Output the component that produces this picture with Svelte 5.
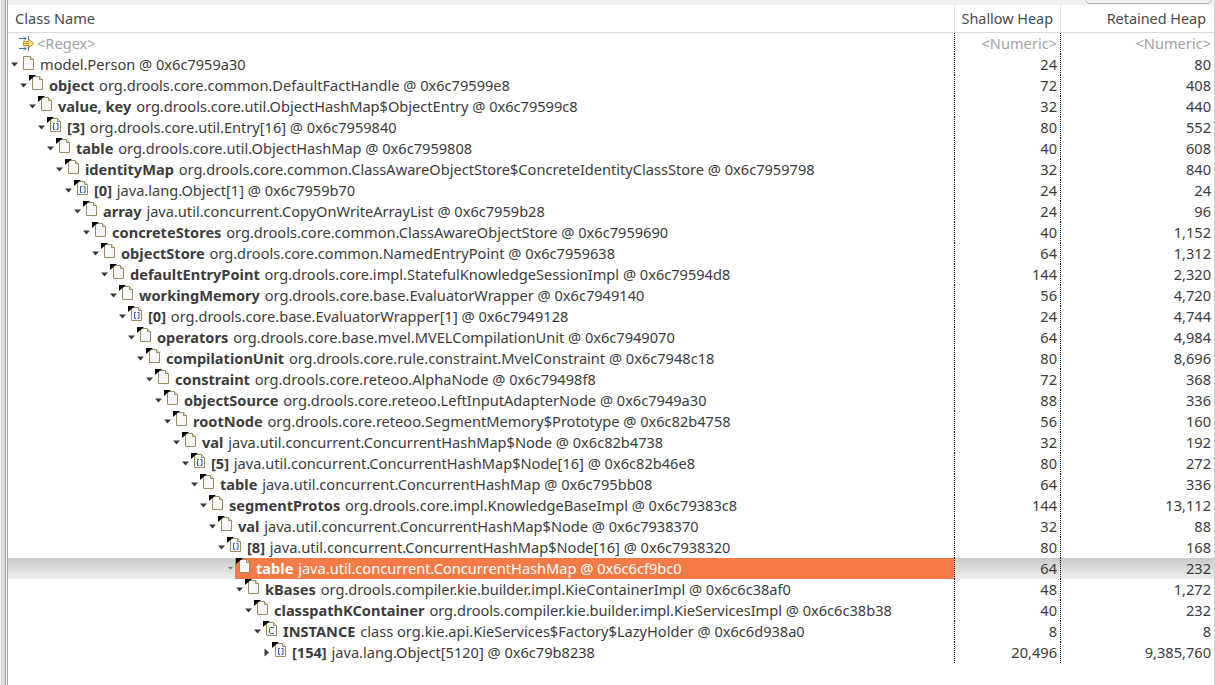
<script>
  const rows = [
    ["", "model.Person @ 0x6c7959a30", "24", "80", "doc"],
    ["object", "org.drools.core.common.DefaultFactHandle @ 0x6c79599e8", "72", "408", "doc"],
    ["value, key", "org.drools.core.util.ObjectHashMap$ObjectEntry @ 0x6c79599c8", "32", "440", "doc"],
    ["[3]", "org.drools.core.util.Entry[16] @ 0x6c7959840", "80", "552", "arr"],
    ["table", "org.drools.core.util.ObjectHashMap @ 0x6c7959808", "40", "608", "doc"],
    ["identityMap", "org.drools.core.common.ClassAwareObjectStore$ConcreteIdentityClassStore @ 0x6c7959798", "32", "840", "doc"],
    ["[0]", "java.lang.Object[1] @ 0x6c7959b70", "24", "24", "arr"],
    ["array", "java.util.concurrent.CopyOnWriteArrayList @ 0x6c7959b28", "24", "96", "doc"],
    ["concreteStores", "org.drools.core.common.ClassAwareObjectStore @ 0x6c7959690", "40", "1,152", "doc"],
    ["objectStore", "org.drools.core.common.NamedEntryPoint @ 0x6c7959638", "64", "1,312", "doc"],
    ["defaultEntryPoint", "org.drools.core.impl.StatefulKnowledgeSessionImpl @ 0x6c79594d8", "144", "2,320", "doc"],
    ["workingMemory", "org.drools.core.base.EvaluatorWrapper @ 0x6c7949140", "56", "4,720", "doc"],
    ["[0]", "org.drools.core.base.EvaluatorWrapper[1] @ 0x6c7949128", "24", "4,744", "arr"],
    ["operators", "org.drools.core.base.mvel.MVELCompilationUnit @ 0x6c7949070", "64", "4,984", "doc"],
    ["compilationUnit", "org.drools.core.rule.constraint.MvelConstraint @ 0x6c7948c18", "80", "8,696", "doc"],
    ["constraint", "org.drools.core.reteoo.AlphaNode @ 0x6c79498f8", "72", "368", "doc"],
    ["objectSource", "org.drools.core.reteoo.LeftInputAdapterNode @ 0x6c7949a30", "88", "336", "doc"],
    ["rootNode", "org.drools.core.reteoo.SegmentMemory$Prototype @ 0x6c82b4758", "56", "160", "doc"],
    ["val", "java.util.concurrent.ConcurrentHashMap$Node @ 0x6c82b4738", "32", "192", "doc"],
    ["[5]", "java.util.concurrent.ConcurrentHashMap$Node[16] @ 0x6c82b46e8", "80", "272", "arr"],
    ["table", "java.util.concurrent.ConcurrentHashMap @ 0x6c795bb08", "64", "336", "doc"],
    ["segmentProtos", "org.drools.core.impl.KnowledgeBaseImpl @ 0x6c79383c8", "144", "13,112", "doc"],
    ["val", "java.util.concurrent.ConcurrentHashMap$Node @ 0x6c7938370", "32", "88", "doc"],
    ["[8]", "java.util.concurrent.ConcurrentHashMap$Node[16] @ 0x6c7938320", "80", "168", "arr"],
    ["table", "java.util.concurrent.ConcurrentHashMap @ 0x6c6cf9bc0", "64", "232", "doc"],
    ["kBases", "org.drools.compiler.kie.builder.impl.KieContainerImpl @ 0x6c6c38af0", "48", "1,272", "doc"],
    ["classpathKContainer", "org.drools.compiler.kie.builder.impl.KieServicesImpl @ 0x6c6c38b38", "40", "232", "doc"],
    ["INSTANCE", "class org.kie.api.KieServices$Factory$LazyHolder @ 0x6c6d938a0", "8", "8", "cls"],
    ["[154]", "java.lang.Object[5120] @ 0x6c79b8238", "20,496", "9,385,760", "arr"]
  ];
  const SELECTED = 24;
</script>

<div class="view">
  <div class="sash"></div>
  <div class="main">
    <div class="topstrip"><span class="tabcorner"></span></div>
    <div class="header">
      <div class="hcell first">Class Name</div>
      <div class="hcell num">Shallow Heap</div>
      <div class="hcell num last">Retained Heap</div>
    </div>

    <div class="row filter">
      <div class="cell name">
        <svg class="regex" width="16" height="17" viewBox="0 0 16 17">
          <path d="M0 2.5h7M5 0.5l2 2-2 2M0 12.5h7M5 10.5l2 2-2 2" fill="none" stroke="#4a6f96" />
          <path d="M9.5 0v4M9.5 11v4" fill="none" stroke="#4a6f96" />
          <path d="M4.5 5.5h5.5V3.5l5 4-5 4V9.5H4.5z" fill="#ffe9a0" stroke="#cc951f" />
          <path d="M4 7.5h6" stroke="#cc951f" />
        </svg>
        <span class="hint">&lt;Regex&gt;</span>
      </div>
      <div class="cell val hint dotted">&lt;Numeric&gt;</div>
      <div class="cell val hint last">&lt;Numeric&gt;</div>
    </div>

    {#each rows as r, i}
      <div class="row" class:selected={i === SELECTED}>
        <div class="cell name" style="padding-left: {i * 9}px">
          <svg class="arrow" width="9" height="9" viewBox="0 0 9 9">
            {#if i === rows.length - 1}
              <path d="M2.5 0.5 L7 4.5 L2.5 8.5Z" />
            {:else if i === SELECTED}
              <path d="M2 3 L7 3 L4.5 5.5Z" class="muted" />
            {:else}
              <path d="M1 2.5 L8 2.5 L4.5 6.5Z" />
            {/if}
          </svg>
          <span class="content">
            <svg class="icon" class:root={i === 0} width="18" height="17" viewBox="0 0 18 17">
              <path d="M3.5 1.5h7l3 3v10h-10z" fill="#f5f7fb" stroke="#a08a58" />
              <path d="M10.5 1.5v3h3" fill="#e4e2d4" stroke="#a08a58" />
              {#if i > 0}
                <path d="M0 0h7L0 6z" fill="#000" />
              {/if}
              {#if r[4] === "arr"}
                <path d="M8 6.5H6.5v6H8M9.5 6.5H11v6H9.5" fill="none" stroke="#2f5f9e" />
              {:else if r[4] === "cls"}
                <path d="M11 6.5H7.500l-1 1v4l1 1H11" fill="none" stroke="#2f5f9e" />
              {/if}
            </svg>
            <span class="label">{#if r[0]}<b>{r[0]}</b>{" "}{/if}{r[1]}</span>
          </span>
        </div>
        <div class="cell val dotted">{r[2]}</div>
        <div class="cell val last">{r[3]}</div>
      </div>
    {/each}
  </div>
</div>

<style>
  :global(body) {
    margin: 0;
    background: #fff;
  }
  .view {
    display: flex;
    width: 1215px;
    height: 685px;
    overflow: hidden;
    font-family: "Noto Sans", sans-serif;
    font-size: 14.6px;
    color: #3c3c3c;
    background: #fff;
  }
  .sash {
    box-sizing: border-box;
    width: 6px;
    flex: none;
    margin-right: 2px;
    background: #dcdcda;
    border-left: 1px solid #f4f4f2;
    border-right: 1px solid #a9a9a7;
    box-shadow: 1px 0 0 #f0f0ee, 2px 0 0 #a9a9a7;
  }
  .main {
    flex: 1;
    min-width: 0;
    border-right: 1px solid #d4d4d2;
    box-sizing: border-box;
  }
  .topstrip {
    height: 5px;
    background: #f0f0ee;
    position: relative;
  }
  .tabcorner {
    position: absolute;
    left: 1077px;
    right: 2px;
    top: -4px;
    height: 6px;
    border: 1px solid #b5b5b3;
    border-radius: 0 0 5px 5px;
    background: #f0f0ee;
  }
  .header {
    display: grid;
    grid-template-columns: 947px 106px 1fr;
    height: 28px;
    box-sizing: border-box;
    border-bottom: 1px solid #d9d9d9;
  }
  .hcell {
    line-height: 27px;
    color: #4a4a4a;
    border-right: 1px solid #e4e4e4;
    padding-right: 7px;
    white-space: nowrap;
  }
  .hcell.first {
    padding-left: 7px;
  }
  .hcell.num {
    text-align: right;
    font-size: 14.4px;
  }
  .hcell.last {
    border-right: 0;
    padding-right: 8px;
  }
  .row {
    display: grid;
    grid-template-columns: 947px 106px 1fr;
    height: 21px;
    line-height: 20px;
  }
  .row.selected {
    background: linear-gradient(#c9c9c7, #eeeeec);
  }
  .cell {
    box-sizing: border-box;
    white-space: nowrap;
    min-width: 0;
  }
  .name {
    display: flex;
    align-items: stretch;
    border-right: 1px dotted #000;
  }
  .val {
    text-align: right;
    padding-right: 3px;
  }
  .val.dotted {
    border-right: 1px dotted #000;
  }
  .val.last {
    padding-right: 3px;
  }
  .hint {
    color: #a3a3a3;
  }
  .filter .name {
    align-items: flex-start;
  }
  .regex {
    margin-left: 11px;
    margin-right: 2px;
    margin-top: 3px;
    flex: none;
  }
  .arrow {
    flex: none;
    margin: 6px 2px 0 2px;
    fill: #3a3a3a;
  }
  .arrow .muted {
    fill: #7a7a7a;
  }
  .content {
    display: flex;
    align-items: flex-start;
    flex: 1;
    min-width: 0;
    margin-left: -2px;
  }
  .icon {
    flex: none;
    margin-left: 1px;
  }
  .icon.root {
    margin-top: 1px;
  }
  .label {
    margin-left: 2px;
    line-height: 20px;
  }
  .label b {
    margin-right: 1px;
  }
  .selected .content {
    background: #f47a48;
    color: #fff;
  }
</style>
